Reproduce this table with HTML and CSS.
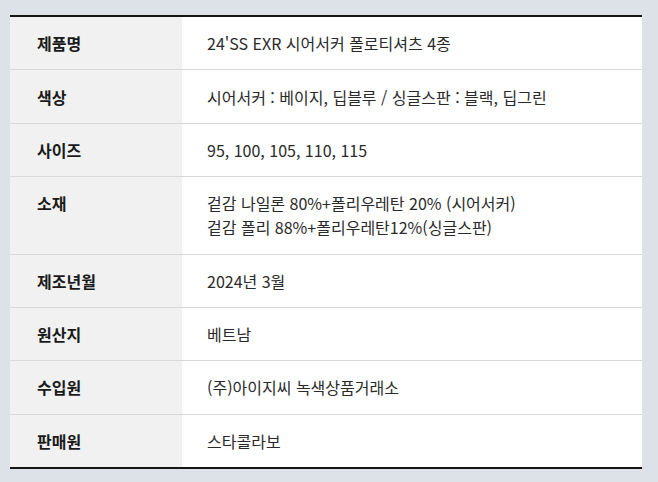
FILE: index.html
```html
<!DOCTYPE html>
<html lang="ko">
<head>
<meta charset="utf-8">
<link rel="stylesheet" href="styles.css">
</head>
<body>
<div class="page">
  <table class="spec">
    <tbody>
      <tr><th>제품명</th><td>24'SS EXR 시어서커 폴로티셔츠 4종</td></tr>
      <tr><th>색상</th><td>시어서커 : 베이지, 딥블루 / 싱글스판 : 블랙, 딥그린</td></tr>
      <tr><th>사이즈</th><td>95, 100, 105, 110, 115</td></tr>
      <tr><th>소재</th><td>겉감 나일론 80%+폴리우레탄 20% (시어서커)<br>겉감 폴리 88%+폴리우레탄12%(싱글스판)</td></tr>
      <tr><th>제조년월</th><td>2024년 3월</td></tr>
      <tr><th>원산지</th><td>베트남</td></tr>
      <tr><th>수입원</th><td>(주)아이지씨 녹색상품거래소</td></tr>
      <tr><th>판매원</th><td>스타콜라보</td></tr>
    </tbody>
  </table>
</div>
</body>
</html>
```

FILE: styles.css
```css
html, body {
  margin: 0;
  padding: 0;
  background: #dde2e8;
}
body {
  font-family: "Noto Sans CJK KR", "Noto Sans", sans-serif;
  color: #222;
}
.page {
  width: 658px;
  height: 482px;
  padding: 15px 16px 0 10px;
  box-sizing: border-box;
}
.spec {
  width: 632px;
  border-collapse: collapse;
  border-top: 2px solid #151515;
  border-bottom: 2px solid #151515;
  background: #fff;
}
.spec th,
.spec td {
  font-size: 16px;
  line-height: 24px;
  padding: 14.2px 0;
  vertical-align: top;
  text-align: left;
  border-bottom: 1px solid #d8d8d8;
}
.spec tr:last-child th,
.spec tr:last-child td {
  border-bottom: none;
}
.spec th {
  width: 145px;
  padding-left: 27px;
  background: #f1f1f1;
  font-weight: 700;
  color: #1a1a1a;
}
.spec td {
  padding-left: 25px;
  font-weight: 400;
  color: #2a2a2a;
}
```
